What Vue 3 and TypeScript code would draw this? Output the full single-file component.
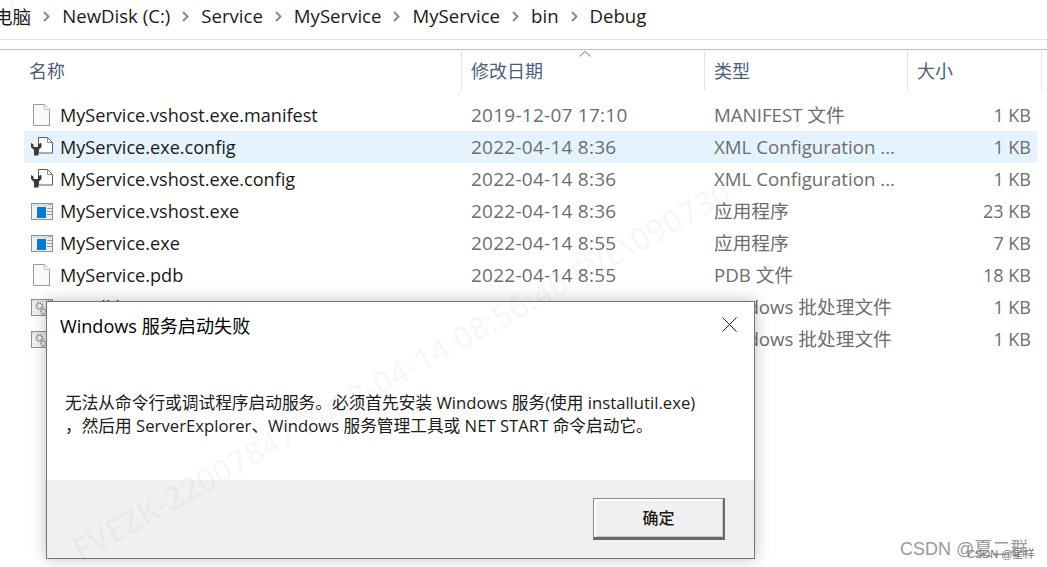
<script setup lang="ts">
interface Row {
  name: string
  date: string
  type: string
  size: string
  icon: 'file' | 'config' | 'exe' | 'bat'
  selected?: boolean
}

const crumbs: string[] = ['电脑', 'NewDisk (C:)', 'Service', 'MyService', 'MyService', 'bin', 'Debug']

const rows: Row[] = [
  { name: 'MyService.vshost.exe.manifest', date: '2019-12-07 17:10', type: 'MANIFEST 文件', size: '1 KB', icon: 'file' },
  { name: 'MyService.exe.config', date: '2022-04-14 8:36', type: 'XML Configuration ...', size: '1 KB', icon: 'config', selected: true },
  { name: 'MyService.vshost.exe.config', date: '2022-04-14 8:36', type: 'XML Configuration ...', size: '1 KB', icon: 'config' },
  { name: 'MyService.vshost.exe', date: '2022-04-14 8:36', type: '应用程序', size: '23 KB', icon: 'exe' },
  { name: 'MyService.exe', date: '2022-04-14 8:55', type: '应用程序', size: '7 KB', icon: 'exe' },
  { name: 'MyService.pdb', date: '2022-04-14 8:55', type: 'PDB 文件', size: '18 KB', icon: 'file' },
  { name: 'Install.bat', date: '2022-04-14 8:56', type: 'Windows 批处理文件', size: '1 KB', icon: 'bat' },
  { name: 'Uninstall.bat', date: '2022-04-14 8:56', type: 'Windows 批处理文件', size: '1 KB', icon: 'bat' },
]
</script>

<template>
  <div class="page">
    <nav class="crumbs">
      <template v-for="(c, i) in crumbs" :key="i">
        <svg v-if="i > 0" class="chev" width="7" height="11" viewBox="0 0 7 11">
          <path d="M1 1l4.500 4.500L1 10" fill="none" stroke="#8a8a8a" stroke-width="2" />
        </svg>
        <span>{{ c }}</span>
      </template>
    </nav>
    <div class="rule"></div>

    <div class="head">
      <div class="hcell hname">名称</div>
      <div class="hcell hsep">修改日期<svg class="sort" width="12" height="6" viewBox="0 0 12 6"><path d="M.5 5.500L6 .5l5.500 5" fill="none" stroke="#7a7a7a" /></svg></div>
      <div class="hcell hsep">类型</div>
      <div class="hcell hsep hlast">大小</div>
    </div>

    <div class="list">
      <div v-for="r in rows" :key="r.name" class="row" :class="{ selected: r.selected }">
        <div class="cname">
          <svg class="ico" width="24" height="24" viewBox="0 0 24 24">
            <template v-if="r.icon === 'file'">
              <path d="M3.500 1.500h11l5 5v16h-16z" fill="#f9f9f9" stroke="#9a9a9a" />
              <path d="M14.500 1.500v5h5" fill="#fff" stroke="#c4c4c4" />
            </template>
            <template v-else-if="r.icon === 'config'">
              <path d="M8.500 2.500h9l5 5v10.500h-14z" fill="#fff" stroke="#5a5a5a" />
              <path d="M17.500 2.500v5h5" fill="none" stroke="#8a8a8a" />
              <path d="M1 8L3.500 9.500V12H8V9.500L10.500 8l1 .5V12L8.500 15V20.500H4V15L1 12Z" fill="#3a3a3a" />
            </template>
            <template v-else>
              <rect x="1.500" y="4.500" width="21" height="16" fill="#f0f0f0" stroke="#8f8f8f" />
              <rect x="2" y="5" width="20" height="2.500" fill="#e0e0e0" />
              <path d="M18 5.500h1M20 5.500h1" stroke="#9a9a9a" />
              <template v-if="r.icon === 'exe'">
                <rect x="7" y="8" width="9" height="11" fill="#0a78d7" />
                <path d="M17 9.500h5M17 12.500h5M17 15.500h5" stroke="#9a9a9a" />
              </template>
              <template v-else>
                <circle cx="9.500" cy="11" r="3" fill="none" stroke="#8c8c8c" stroke-width="2" stroke-dasharray="1.500 .8" />
                <circle cx="13.500" cy="16.500" r="2.500" fill="none" stroke="#9c9c9c" stroke-width="2" stroke-dasharray="1.500 .8" />
              </template>
            </template>
          </svg>
          <span class="ntext">{{ r.name }}</span>
        </div>
        <div class="cdate">{{ r.date }}</div>
        <div class="ctype">{{ r.type }}</div>
        <div class="csize">{{ r.size }}</div>
      </div>
    </div>

    <div class="wm wm2">22007847</div>

    <section class="dialog">
      <div class="dbody">
        <div class="dtitle">
          <span>Windows 服务启动失败</span>
          <svg width="15" height="15" viewBox="0 0 15 15"><path d="M.5 .5l14 14M14.500 .5l-14 14" stroke="#222" fill="none" /></svg>
        </div>
        <p class="dmsg">无法从命令行或调试程序启动服务。必须首先安装 Windows 服务(使用 installutil.exe)<br />，然后用 ServerExplorer、Windows 服务管理工具或 NET START 命令启动它。</p>
      </div>
      <div class="dfoot">
        <button class="okbtn" type="button">确定</button>
      </div>
    </section>

    <div class="wm wm1">FVEZK-22007847 2022-04-14 08:56:40 FVE\090730</div>

    <div class="mark"><span class="mark1">CSDN @夏二群</span><span class="mark2">CSDN @星祥</span></div>
  </div>
</template>

<style>
html, body { margin: 0; background: #fff; }
</style>

<style scoped>
.page {
  position: relative;
  width: 1047px;
  height: 567px;
  overflow: hidden;
  background: #fff;
  font-family: "Open Sans", "Noto Sans CJK SC", sans-serif;
  font-size: 18px;
  color: #1a1a1a;
}
.crumbs {
  display: flex;
  align-items: center;
  gap: 12px;
  height: 31px;
  margin-left: -6px;
  white-space: nowrap;
  font-size: 18.600px;
  color: #1a1a1a;
}
.chev { flex: none; margin-top: 2px; }
.rule {
  height: 9px;
  margin-top: 8px;
  border-top: 1px solid #dedede;
  border-bottom: 1px solid #bdbdbd;
}
.head {
  display: grid;
  grid-template-columns: 437px 243px 203px 135px;
  margin-left: 24px;
  height: 40px;
  color: #4c607a;
  font-size: 18px;
}
.hcell {
  position: relative;
  display: flex;
  align-items: center;
  padding-left: 5px;
  white-space: nowrap;
}
.hsep { border-left: 1px solid #e5e5e5; padding-left: 9px; }
.hlast { border-right: 1px solid #e5e5e5; }
.sort { position: absolute; left: 117px; top: 1px; }
.list { margin: 9px 0 0 24px; width: 1013px; }
.row {
  display: grid;
  grid-template-columns: 437px 243px 203px 130px;
  height: 32px;
  align-items: center;
  white-space: nowrap;
}
.row.selected { background: #e5f3ff; }
.cname { display: flex; align-items: center; padding-left: 6px; gap: 6px; font-size: 18.100px; }
.ico { flex: none; }
.ntext { color: #1a1a1a; }
.cdate { padding-left: 10px; color: #6d6d6d; font-size: 19px; letter-spacing: 0.25px; }
.ctype { padding-left: 10px; color: #6d6d6d; font-size: 18.700px; line-height: 24px; }
.csize { padding-right: 6px; text-align: right; color: #6d6d6d; }

.wm {
  position: absolute;
  white-space: nowrap;
  pointer-events: none;
  font-family: "Open Sans", sans-serif;
  font-size: 32px;
  font-weight: 600;
  color: rgba(0, 0, 0, 0.035);
  transform-origin: 0 100%;
  transform: rotate(-29deg);
}
.wm1 { left: 85px; top: 527px; z-index: 3; }
.wm2 { left: -100px; top: 42px; }

.dialog {
  position: absolute;
  left: 46px;
  top: 301px;
  z-index: 2;
  box-sizing: border-box;
  width: 709px;
  height: 258px;
  display: flex;
  flex-direction: column;
  background: #fff;
  border: 1px solid #757575;
  box-shadow: 0 0 14px rgba(0, 0, 0, 0.25);
}
.dbody { flex: 1; }
.dtitle {
  display: flex;
  align-items: center;
  justify-content: space-between;
  padding: 10px 17px 0 13px;
  height: 25px;
  font-size: 18.100px;
  color: #000;
}
.dmsg {
  margin: 54px 0 0 18px;
  font-size: 16.700px;
  line-height: 23px;
  color: #1a1a1a;
  white-space: nowrap;
}
.dfoot {
  height: 78px;
  flex: none;
  box-sizing: border-box;
  display: flex;
  justify-content: flex-end;
  padding: 18px 29px 0 0;
  background: #f0f0f0;
}
.okbtn {
  width: 132px;
  height: 42px;
  box-sizing: border-box;
  font-family: "Noto Sans CJK SC", sans-serif;
  font-size: 16px;
  font-weight: 500;
  color: #1a1a1a;
  background: #f0f0f0;
  border: 1px solid #8a8a8a;
  border-right: 2px solid #6a6a6a;
  border-bottom: 3px solid #6a6a6a;
  box-shadow: inset 2px 2px 0 #fff, inset -1px -1px 0 #c8c8c8;
  padding: 0 0 2px;
}
.mark {
  position: absolute;
  left: 900px;
  top: 534px;
  z-index: 4;
  height: 24px;
  width: 140px;
  white-space: nowrap;
  font-family: "Liberation Sans", "Noto Sans CJK SC", sans-serif;
  color: #9a9a9a;
}
.mark1 { position: absolute; left: 0; top: 0; font-size: 18px; }
.mark2 { position: absolute; left: 67px; top: 11px; font-size: 11px; color: #777; }
</style>
